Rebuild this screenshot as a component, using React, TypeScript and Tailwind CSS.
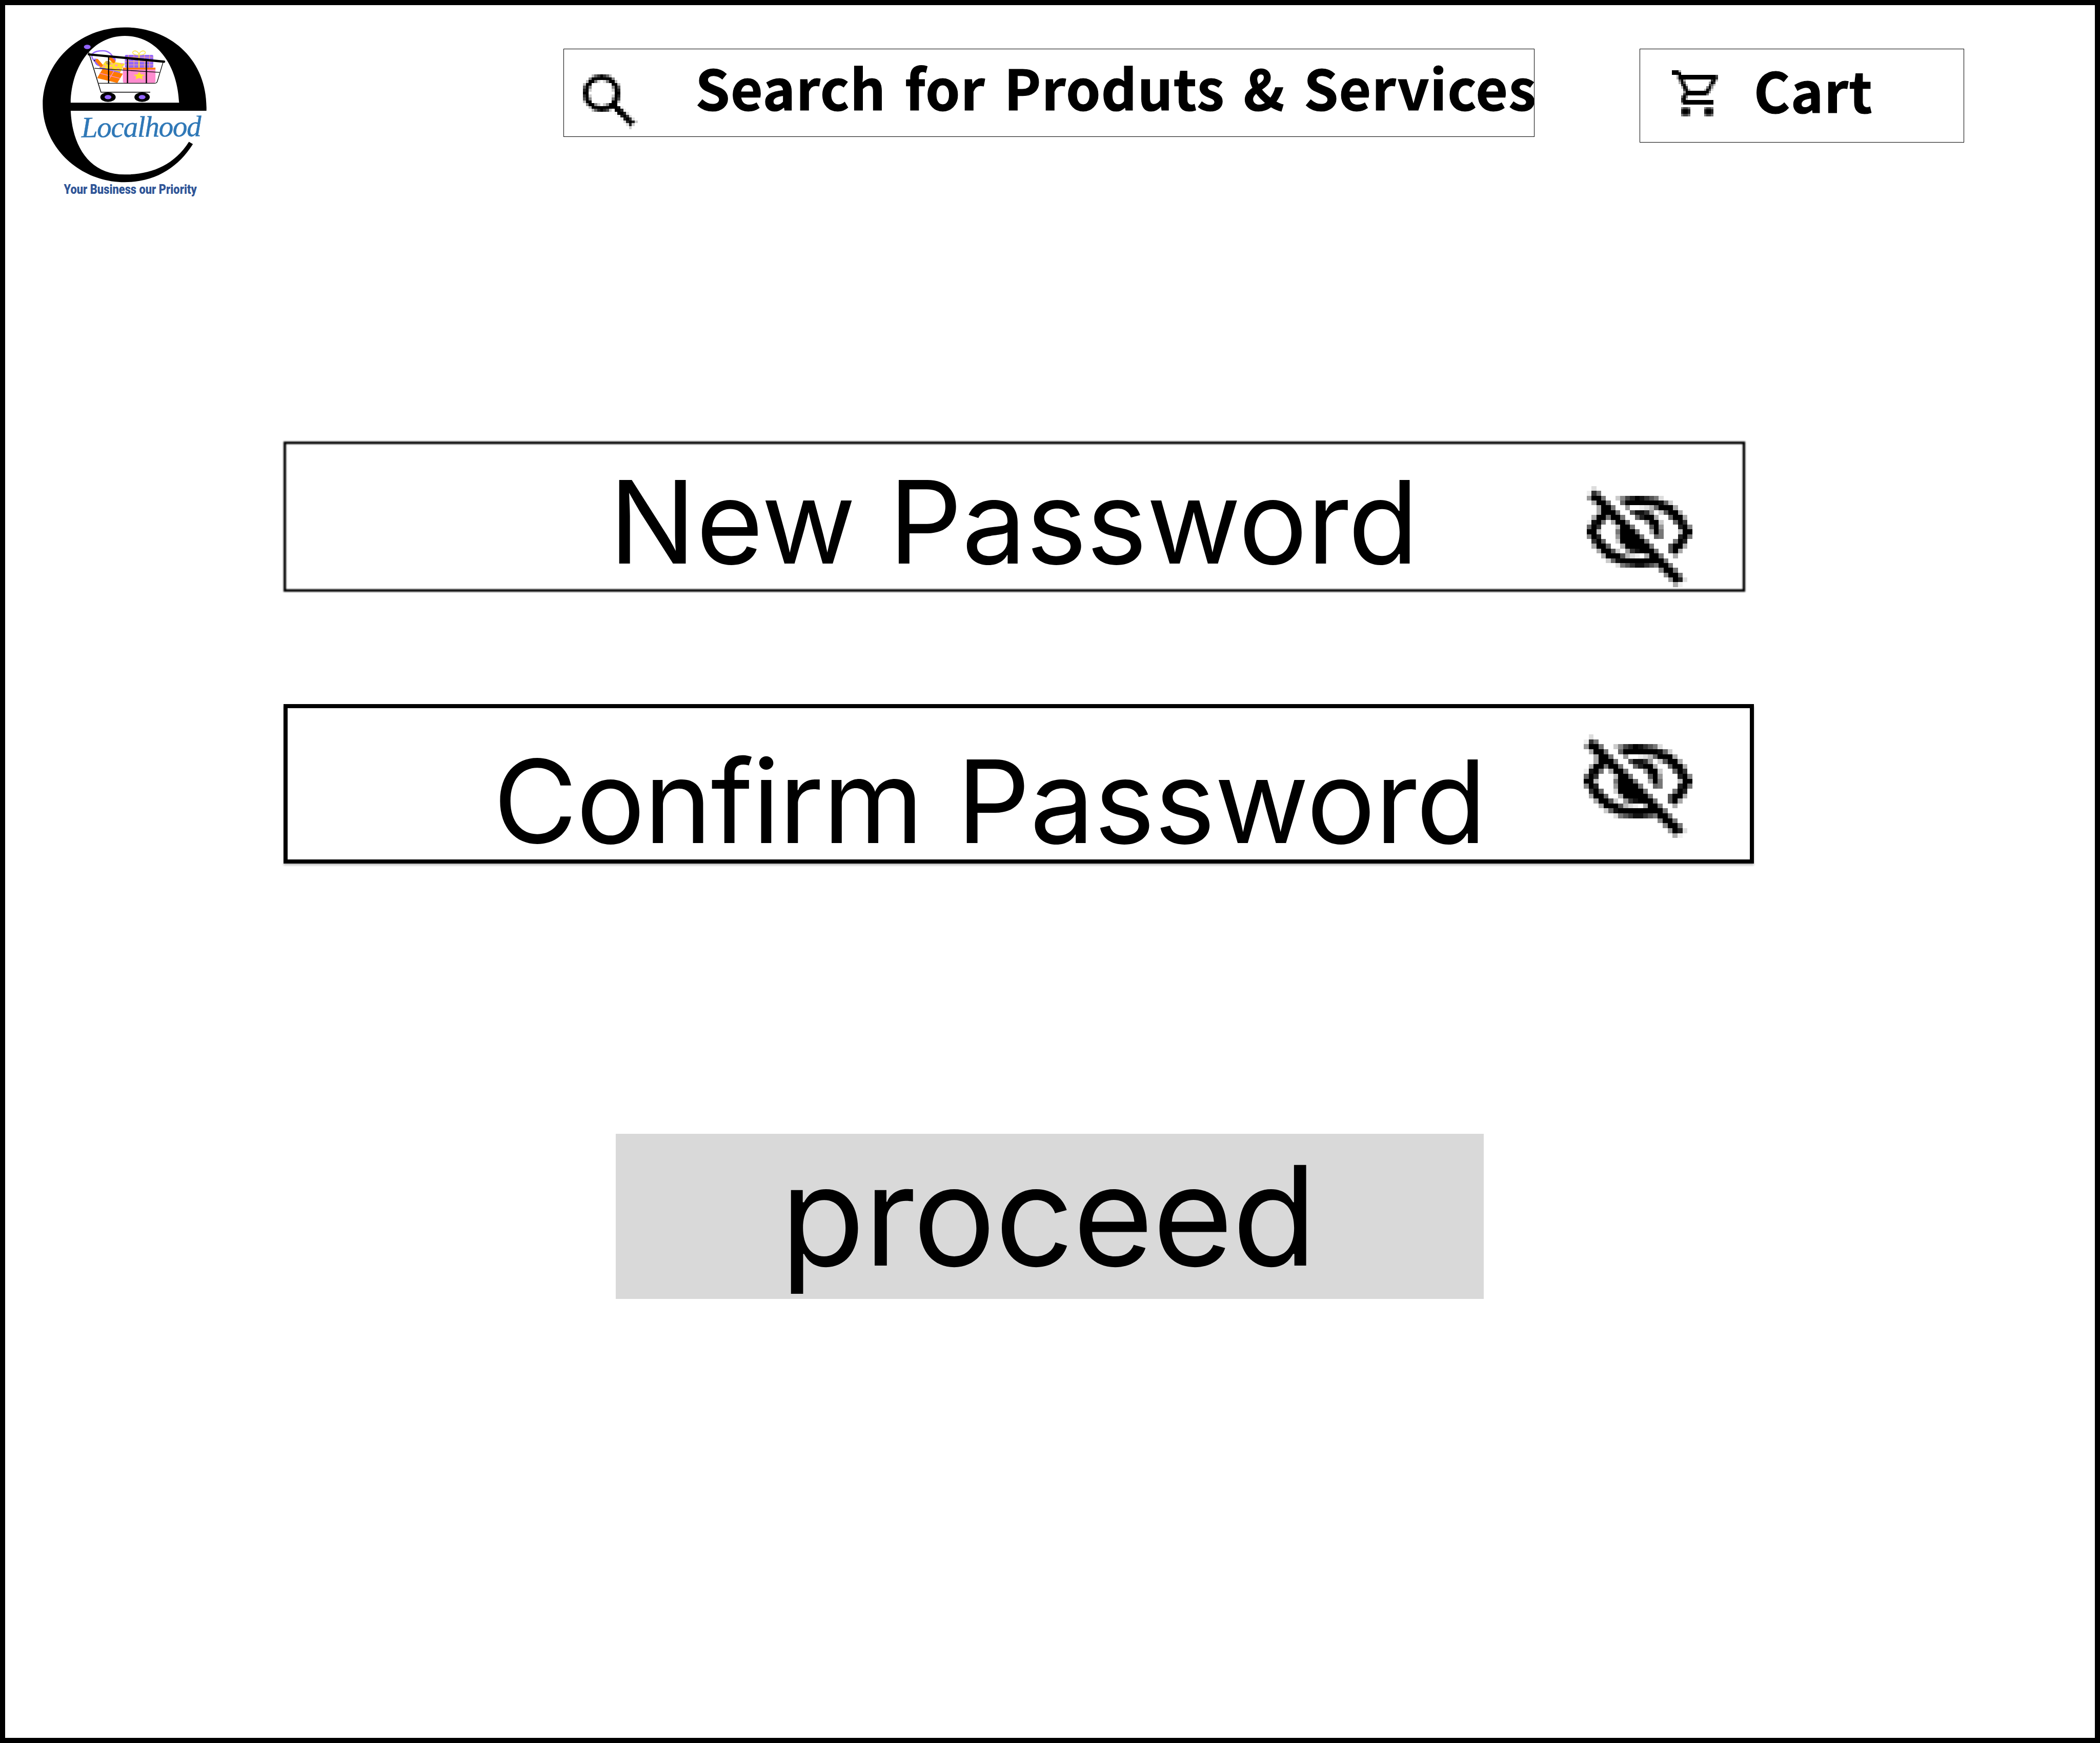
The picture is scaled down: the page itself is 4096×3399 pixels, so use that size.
import React from "react";

/* Bitmap icons: one hex digit per pixel, 0 (or a dot) is empty and f is solid black. */
const EYE_OFF = [
  ".2....................",
  "1c8...................",
  "6ff8..37bdfeca82......",
  ".5ff8..9fffffffe93....",
  "..5ff8..6..1249fff5...",
  "..5fff8..aeec6.3aff5..",
  ".5ff8ff8..9dff5..9ff5.",
  "1ef8.5ff8...6ff3..9fc.",
  "9fc...4ff8...af6...df7",
  "ff4...8fff8..5f8...4ff",
  "7fd...6ffff8..98...df8",
  ".cf9..3fffff8.....8fd.",
  ".5ff9..5fffff8...aff5.",
  "..5ffa3.6cefff8..af5..",
  "...5fffa421.5ff8..5...",
  "....39efffffffff8.....",
  "......28aceeca8ff8....",
  "...............7ff8...",
  "................7ff8..",
  ".................6fd2.",
  "..................51..",
];

const MAGNIFIER = [
  "...49cfc94.........",
  "..7fffffff7........",
  ".4ff82.28ff4.......",
  "4ff.......ff4......",
  "af7.......7fa......",
  "df3.......3fd......",
  "ff.........ff......",
  "cf3.......3fd......",
  "af7.......8fb......",
  "4ff.......ff4......",
  ".7ff73.37fff.......",
  "..4fffffffffe1.....",
  "...49dfdb3.ffd1....",
  "...........1ffd2...",
  "............1dfc2..",
  ".............1dfc2.",
  "..............2dfd3",
  "...............2d3.",
  "................3..",
];

const CART = [
  "fff5................",
  "ffff................",
  "..4ffffffffffffffffb",
  "..5ffffffffffffffffc",
  "...9f5...........cf4",
  "...5fa..........6fc.",
  "....cf4.........c93.",
  "....4fc........8f6..",
  ".....cf4......4fc2..",
  ".....6ffffffffff6...",
  "....1cfffffffff8....",
  "....9f8.............",
  "....df4.............",
  "....cfffffffffffff..",
  "....4fffffffffffff..",
  "....................",
  "....8bb8......8bb8..",
  "....dffd......dffd..",
  "....dffd......dffd..",
  "....8bb8......8bb8..",
];

function PixelIcon({ rows, label, className }: { rows: string[]; label: string; className: string }) {
  return (
    <svg
      role="img"
      aria-label={label}
      viewBox={`0 0 ${rows[0].length} ${rows.length}`}
      preserveAspectRatio="none"
      shapeRendering="crispEdges"
      className={className}
    >
      {rows.flatMap((row, y) =>
        row.split("").map((c, x) =>
          c === "." ? null : (
            <rect key={`${x}-${y}`} x={x} y={y} width={1} height={1} fillOpacity={parseInt(c, 16) / 15} />
          ),
        ),
      )}
    </svg>
  );
}

function Logo() {
  return (
    <svg viewBox="0 0 1260 1200" className="mt-[26px] h-[359.5px] w-[377.4px] shrink-0" role="img" aria-label="eLocalhood">
      {/* letter mark */}
      <path
        fillRule="evenodd"
        d="M1164 601C1175 270 930 58 632 58C330 58 98 290 98 560C98 840 340 1066 632 1066C830 1066 980 970 1076 818L1050 803C950 960 800 1016 632 1016C400 1016 290 830 280 601ZM280 548C285 300 430 113 632 113C840 113 975 300 986 548Z"
      />
      {/* headphones */}
      <path d="M434 278C396 232 430 210 490 210C530 210 552 238 560 262" fill="none" stroke="#9466ff" strokeWidth="8" />
      <path d="M432 262C432 290 446 308 468 312L478 300L448 262Z" fill="#9466ff" />
      <path d="M540 238C566 242 578 262 572 280L556 284Z" fill="#9466ff" />
      {/* yellow parcel */}
      <path d="M508 276L632 294L604 350L466 318L492 298Z" fill="#ffe02e" />
      <path d="M466 315L604 347L600 355L470 325Z" fill="#9466ff" />
      <g fill="#ff8ccf">
        <ellipse cx="497" cy="311" rx="8" ry="5" />
        <ellipse cx="544" cy="320" rx="8" ry="5" />
        <ellipse cx="577" cy="305" rx="9" ry="6" />
        <ellipse cx="590" cy="329" rx="7" ry="5" />
        <ellipse cx="548" cy="295" rx="7" ry="4" />
        <ellipse cx="612" cy="294" rx="8" ry="4" />
        <ellipse cx="618" cy="314" rx="6" ry="4" />
      </g>
      <path d="M512 278L538 286M508 286L540 296M512 294L534 300" stroke="#5a3ca8" strokeWidth="3" />
      <path d="M452 274L478 304" stroke="#ff7a00" strokeWidth="21" strokeLinecap="round" />
      <path d="M540 262L560 280" stroke="#ff7a00" strokeWidth="21" strokeLinecap="round" />
      <circle cx="435" cy="275" r="4" />
      {/* orange box */}
      <path d="M488 328L620 360L584 420L452 388Z" fill="#ff7a00" />
      <path d="M468 356L602 390M562 342L524 406" stroke="#ff8ccf" strokeWidth="5" />
      {/* pink box with star */}
      <rect x="620" y="322" width="212" height="98" rx="12" fill="#ff8ccf" />
      <rect x="620" y="320" width="212" height="12" fill="#ff7a00" />
      <path d="M726 347L737 364L764 367L744 378L750 396L726 387L702 396L708 378L688 367L715 364Z" fill="#ffe02e" />
      {/* plaid gift */}
      <rect x="633" y="237" width="185" height="83" rx="8" fill="#9466ff" />
      <path d="M656 237V320M692 237V320M760 237V320M794 237V320M633 252H818M633 280H818M633 302H818" stroke="#ffae80" strokeWidth="4" />
      <path d="M725 237V320" stroke="#ffe02e" strokeWidth="8" />
      <path d="M725 237C700 240 676 228 686 216C700 204 722 216 725 237C728 216 750 204 764 216C774 228 750 240 725 237Z" fill="none" stroke="#ffe85a" strokeWidth="6" />
      {/* trolley */}
      <g fill="none" stroke="#000">
        <path d="M397 220L477 480H798" strokeWidth="5" />
        <path d="M435 324L858 351M462 422H826Q840 422 844 410L882 284" strokeWidth="4.5" />
        <path d="M527 246V422M650 254V422M773 264V422" strokeWidth="8" />
        <path d="M398 234L888 281" strokeWidth="15" strokeLinecap="round" />
      </g>
      <ellipse cx="388" cy="185" rx="22" ry="14" fill="#9466ff" />
      <ellipse cx="523" cy="512" rx="50" ry="31" />
      <ellipse cx="745" cy="512" rx="50" ry="31" />
      <ellipse cx="523" cy="512" rx="22" ry="14" fill="#9466ff" />
      <ellipse cx="745" cy="512" rx="22" ry="14" fill="#9466ff" />
      <text
        x="350"
        y="774"
        textLength="782"
        lengthAdjust="spacing"
        transform="rotate(-0.6 350 774)"
        className="fill-[#2f78b7] stroke-[#2f78b7] font-['Liberation_Serif',serif] text-[192px] font-normal italic"
        strokeWidth="1.5"
      >
        Localhood
      </text>
      <text
        x="235"
        y="1142"
        textLength="866"
        lengthAdjust="spacingAndGlyphs"
        className="fill-[#2f5597] font-['Roboto',sans-serif] text-[84px] font-black"
      >
        Your Business our Priority
      </text>
    </svg>
  );
}

export default function App() {
  return (
    <main className="flex h-[3399px] w-[4096px] flex-col items-start overflow-hidden border-[10px] border-black bg-white font-['Inter',sans-serif] text-black">
      <header className="flex h-[851.1px] w-full shrink-0 items-start pl-[43.9px] font-['Noto_Sans_CJK_JP',sans-serif] text-[108px] leading-[110px] font-bold">
        <Logo />
        <div className="mt-[85.3px] ml-[667.6px] flex h-[171.6px] w-[1894.4px] shrink-0 items-start border border-black">
          <PixelIcon rows={MAGNIFIER} label="Search" className="mt-[49px] ml-[37.4px] size-[106.7px] shrink-0" />
          <span className="mt-[16.9px] ml-[112.4px] tracking-[1.3px] whitespace-nowrap [-webkit-text-stroke:1.2px_black] [word-spacing:10.5px]">
            Search for Produts &amp; Services
          </span>
        </div>
        <div className="mt-[85.3px] ml-[204.9px] flex h-[182.6px] w-[632.5px] shrink-0 items-start border border-black">
          <PixelIcon rows={CART} label="Cart" className="mt-[41.2px] ml-[61.9px] size-[89.9px] shrink-0" />
          <span className="mt-[21.4px] ml-[69.7px] tracking-[1.3px] [-webkit-text-stroke:1.2px_black]">Cart</span>
        </div>
      </header>

      <div className="relative ml-[542.5px] flex h-[292.5px] w-[2851.9px] shrink-0 items-start text-[224.7px] leading-[224.7px]">
        <div className="absolute inset-0 border-[5px] border-black blur-[1.4px]" />
        <span className="mt-[43.9px] ml-[635.5px] w-[1583px] shrink-0 whitespace-nowrap">
          <span className="tracking-[0.5px]">New </span>
          <span className="tracking-[-0.9px]">Password</span>
        </span>
        <PixelIcon rows={EYE_OFF} label="Show password" className="mt-[86.7px] ml-[323.9px] h-[196.8px] w-[205.8px] shrink-0" />
      </div>

      <div className="mt-[219.5px] ml-[542.7px] flex h-[310.9px] w-[2868.4px] shrink-0 items-start border-8 border-black text-[224.7px] leading-[224.7px] shadow-[0_3.6px_3.6px_rgba(0,0,0,0.25)]">
        <span className="mt-[68.9px] ml-[401.3px] w-[1957px] shrink-0 whitespace-nowrap">
          <span className="tracking-[-2.4px] [word-spacing:6px]">Confirm </span>
          <span className="tracking-[-0.9px]">Password</span>
        </span>
        <PixelIcon rows={EYE_OFF} label="Show password" className="mt-[51.3px] ml-[170.2px] h-[202.2px] w-[211.8px] shrink-0" />
      </div>

      <button className="mt-[526.6px] ml-[1190.6px] flex h-[322.7px] w-[1693.4px] shrink-0 items-start bg-[#d9d9d9] text-[269.6px] leading-[269.6px]">
        <span className="mt-[25.2px] ml-[321.4px] tracking-[-1.8px]">proceed</span>
      </button>
    </main>
  );
}
